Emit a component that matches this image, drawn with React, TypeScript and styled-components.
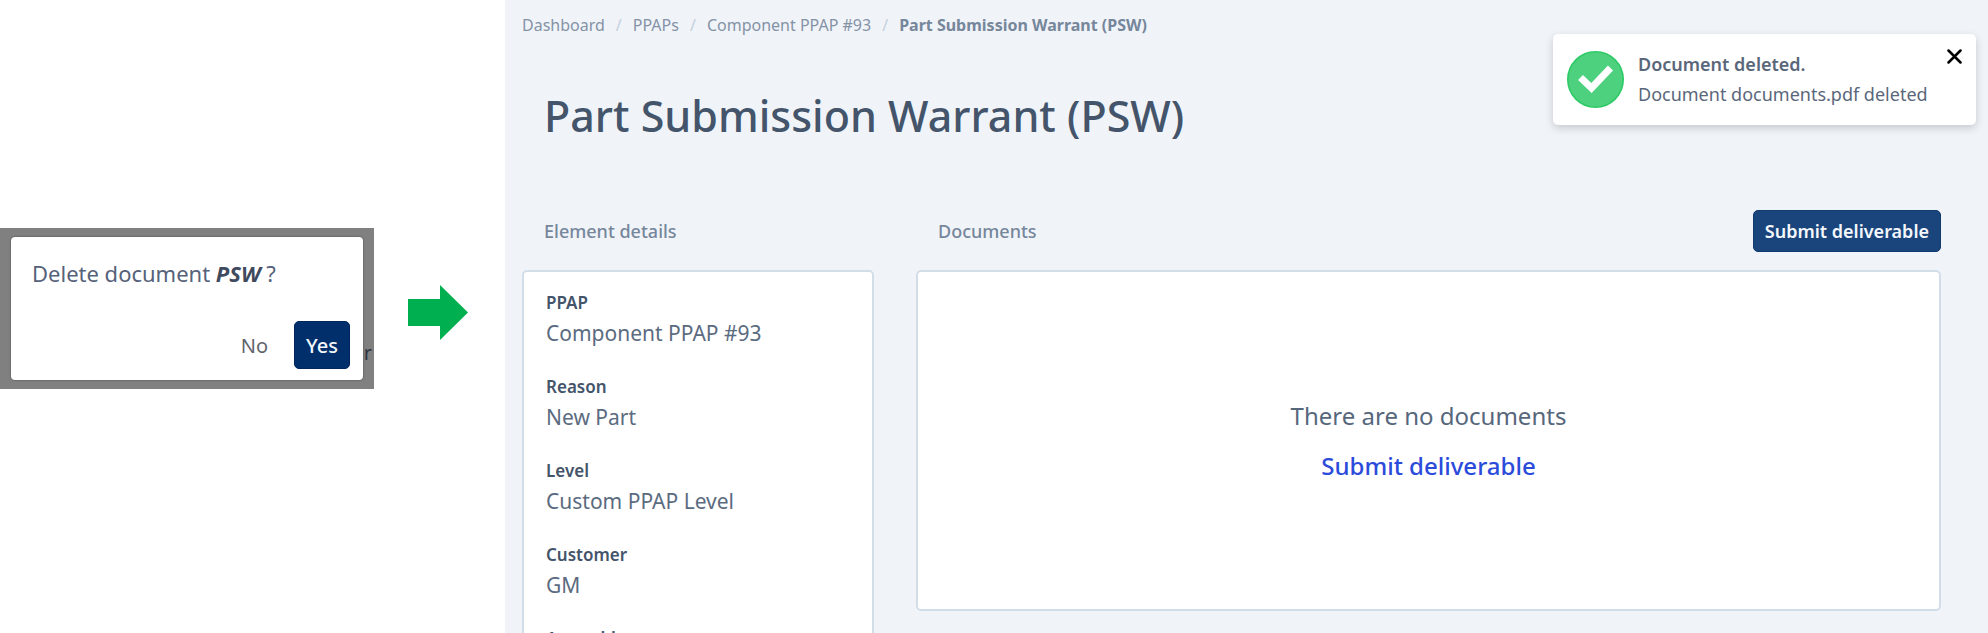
import React from "react";
import styled, { createGlobalStyle } from "styled-components";

const GlobalStyle = createGlobalStyle`
  *, *::before, *::after { box-sizing: border-box; }
  body {
    margin: 0;
    background: #ffffff;
    color: #56627a;
    font-family: "Noto Sans", "Open Sans", sans-serif;
  }
  button { font: inherit; cursor: pointer; }
  h1, h2, p, ol, dl, dd { margin: 0; padding: 0; }
`;

const Shell = styled.div`
  display: grid;
  grid-template-columns: 505px minmax(0, 1fr);
  grid-template-rows: minmax(0, 1fr);
  height: 100vh;
  overflow: hidden;
`;

const Before = styled.section`
  display: flex;
  align-items: center;
  gap: 34px;
  padding-bottom: 16px;
`;

const Backdrop = styled.div`
  position: relative;
  flex: 0 0 374px;
  padding: 9px 11px;
  background: #808080;
`;

const Behind = styled.span`
  position: absolute;
  right: 2px;
  bottom: 22px;
  color: #303640;
  font-size: 20px;
  line-height: 28px;
`;

const Dialog = styled.div`
  display: flex;
  flex-direction: column;
  justify-content: space-between;
  min-height: 143px;
  padding: 20px 13px 11px 21px;
  border-radius: 4px;
  background: #ffffff;
  box-shadow: 0 0 2px rgba(0, 0, 0, 0.5);
`;

const Question = styled.p`
  font-size: 22px;
  line-height: 32px;
  em { font-weight: 700; color: #3f4a5e; }
`;

const DialogActions = styled.div`
  display: flex;
  justify-content: flex-end;
  gap: 8px;
`;

const Button = styled.button<{ $kind: "primary" | "strong" | "plain" }>`
  padding: 0 ${(p) => (p.$kind === "plain" ? "17px" : "11px")};
  height: ${(p) => (p.$kind === "primary" ? "42px" : "48px")};
  border: 1px solid
    ${(p) => ({ primary: "#113a6d", strong: "#00265c", plain: "transparent" })[p.$kind]};
  border-radius: 5px;
  background: ${(p) => ({ primary: "#19457c", strong: "#002f6c", plain: "transparent" })[p.$kind]};
  color: ${(p) => (p.$kind === "plain" ? "#5f646c" : "#f4f7fb")};
  font-size: ${(p) => (p.$kind === "primary" ? "18px" : "20px")};
  font-weight: ${(p) => ({ primary: 600, strong: 500, plain: 400 })[p.$kind]};
`;

const Arrow = styled.svg`
  flex: none;
  margin-top: 8px;
`;

const Workspace = styled.main`
  position: relative;
  padding: 13px 47px 0 17px;
  background: #f0f4f9;
`;

const Crumbs = styled.ol`
  display: flex;
  list-style: none;
  font-size: 16px;
  line-height: 24px;
  color: #8492a6;
  li + li::before {
    content: "/";
    padding: 0 11px;
    color: #c5cfdb;
    font-weight: 400;
  }
  a { color: inherit; text-decoration: none; }
  [aria-current] { font-weight: 700; color: #76869b; }
`;

const Title = styled.h1`
  margin: 49px 0 64px;
  padding-left: 22px;
  color: #44546a;
  font-size: 43px;
  font-weight: 500;
  line-height: 60px;
`;

const Columns = styled.div`
  display: grid;
  grid-template-columns: 352px minmax(0, 1fr);
  align-items: start;
  gap: 42px;
`;

const ColumnHead = styled.div`
  display: flex;
  align-items: center;
  justify-content: space-between;
  min-height: 42px;
  margin-bottom: 18px;
  padding-left: 22px;
`;

const ColumnTitle = styled.h2`
  color: #76869b;
  font-size: 18px;
  font-weight: 500;
  line-height: 24px;
`;

const Card = styled.div`
  border: 2px solid #d3dde8;
  border-radius: 5px;
  background: #ffffff;
`;

const Details = styled(Card).attrs({ as: "dl" })`
  padding: 17px 22px;
`;

const Detail = styled.div`
  margin-bottom: 24px;
  dt { color: #44546a; font-size: 17px; font-weight: 600; line-height: 28px; }
  dd { color: #5b6b80; font-size: 21px; line-height: 32px; }
`;

const Empty = styled(Card)`
  display: flex;
  flex-direction: column;
  align-items: center;
  justify-content: center;
  gap: 18px;
  min-height: 341px;
  color: #56677c;
  font-size: 24px;
  line-height: 32px;
  a { color: #2b4bdb; font-weight: 500; text-decoration: none; }
`;

const Toast = styled.div`
  position: absolute;
  top: 34px;
  right: 12px;
  display: flex;
  gap: 14px;
  width: 423px;
  padding: 15px 14px 16px;
  border-radius: 5px;
  background: #ffffff;
  box-shadow: 0 3px 8px rgba(0, 0, 0, 0.18);
  font-size: 18px;
  line-height: 30px;
  color: #5a677b;
  > svg { flex: none; margin-top: 2px; }
`;

const ToastText = styled.div`
  flex: 1;
  white-space: nowrap;
  strong { display: block; font-weight: 600; }
`;

const Close = styled.button`
  position: absolute;
  top: 15px;
  right: 14px;
  display: flex;
  padding: 0;
  border: 0;
  background: none;
`;

const CRUMBS = ["Dashboard", "PPAPs", "Component PPAP #93"];

const DETAILS = [
  ["PPAP", "Component PPAP #93"],
  ["Reason", "New Part"],
  ["Level", "Custom PPAP Level"],
  ["Customer", "GM"],
  ["Assembly", ""],
];

export default function App() {
  return (
    <>
      <GlobalStyle />
      <Shell>
        <Before>
          <Backdrop>
            <Dialog role="dialog" aria-label="Delete document">
              <Question>
                Delete document <em>PSW</em> ?
              </Question>
              <DialogActions>
                <Button $kind="plain">No</Button>
                <Button $kind="strong">Yes</Button>
              </DialogActions>
            </Dialog>
            <Behind>r</Behind>
          </Backdrop>
          <Arrow width="60" height="55" viewBox="0 0 60 55" aria-hidden="true">
            <path d="M0 14H32V0L60 27.500L32 55V41H0Z" fill="#00b050" />
          </Arrow>
        </Before>

        <Workspace>
          <nav aria-label="Breadcrumb">
            <Crumbs>
              {CRUMBS.map((c) => (
                <li key={c}>
                  <a href="#">{c}</a>
                </li>
              ))}
              <li aria-current="page">Part Submission Warrant (PSW)</li>
            </Crumbs>
          </nav>
          <Title>Part Submission Warrant (PSW)</Title>

          <Columns>
            <section>
              <ColumnHead>
                <ColumnTitle>Element details</ColumnTitle>
              </ColumnHead>
              <Details>
                {DETAILS.map(([label, value]) => (
                  <Detail key={label}>
                    <dt>{label}</dt>
                    <dd>{value}</dd>
                  </Detail>
                ))}
              </Details>
            </section>
            <section>
              <ColumnHead>
                <ColumnTitle>Documents</ColumnTitle>
                <Button $kind="primary">Submit deliverable</Button>
              </ColumnHead>
              <Empty>
                <p>There are no documents</p>
                <a href="#">Submit deliverable</a>
              </Empty>
            </section>
          </Columns>

          <Toast role="status">
            <svg width="57" height="57" viewBox="0 0 57 57" aria-hidden="true">
              <circle cx="28.500" cy="28.500" r="27.700" fill="#4dd17e" stroke="#2dca66" strokeWidth="1.600" />
              <path d="M13.500 26.500L24.500 37L43.500 17" fill="none" stroke="#ffffff" strokeWidth="7" />
            </svg>
            <ToastText>
              <strong>Document deleted.</strong>
              Document documents.pdf deleted
            </ToastText>
            <Close aria-label="Close">
              <svg width="15" height="15" viewBox="0 0 15 15" aria-hidden="true">
                <path d="M1.500 1.500L13.500 13.500M13.500 1.500L1.500 13.500" stroke="#000000" strokeWidth="2.500" strokeLinecap="round" />
              </svg>
            </Close>
          </Toast>
        </Workspace>
      </Shell>
    </>
  );
}
